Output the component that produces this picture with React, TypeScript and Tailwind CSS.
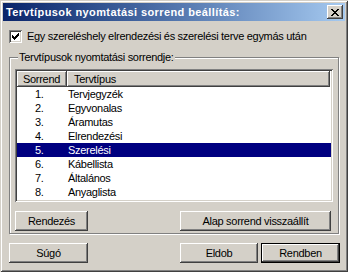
import React from "react";

const raised =
  "shadow-[inset_-1px_-1px_#404040,inset_1px_1px_#ffffff,inset_-2px_-2px_#808080,inset_2px_2px_#d4d0c8]";
const sunken =
  "shadow-[inset_1px_1px_#808080,inset_-1px_-1px_#ffffff,inset_2px_2px_#404040,inset_-2px_-2px_#d4d0c8]";

const rows = [
  "Tervjegyzék",
  "Egyvonalas",
  "Áramutas",
  "Elrendezési",
  "Szerelési",
  "Kábellista",
  "Általános",
  "Anyaglista",
];

function Btn({ label, w, def }: { label: string; w: string; def?: boolean }) {
  if (def) {
    return (
      <div className={`${w} h-[20px] border border-black flex`}>
        <div className={`flex-1 flex items-center justify-center bg-[#d4d0c8] ${raised}`}>
          {label}
        </div>
      </div>
    );
  }
  return (
    <div className={`${w} h-[20px] flex items-center justify-center bg-[#d4d0c8] ${raised}`}>
      {label}
    </div>
  );
}

export default function App() {
  return (
    <div
      className="w-[348px] h-[272px] bg-[#d4d0c8] p-[3px] flex flex-col text-black text-[11px] leading-[13px] tracking-[-0.3px] font-['Liberation_Sans',Arial,sans-serif] shadow-[inset_1px_1px_#d4d0c8,inset_-1px_-1px_#404040,inset_2px_2px_#ffffff,inset_-2px_-2px_#808080]"
    >
      {/* Title bar */}
      <div className="h-[18px] shrink-0 flex items-center justify-between pl-[3px] pr-[2px] bg-gradient-to-r from-[#0a246a] to-[#a6caf0]">
        <span className="text-white font-bold tracking-[0.4px]">Tervtípusok nyomtatási sorrend beállítás:</span>
        <div className={`w-[16px] h-[14px] bg-[#d4d0c8] flex items-center justify-center ${raised}`}>
          <svg width="8" height="7" viewBox="0 0 8 7" shapeRendering="crispEdges">
            <path
              fill="#000"
              d="M0 0h2v1H0zM6 0h2v1H6zM1 1h2v1H1zM5 1h2v1H5zM2 2h4v1H2zM3 3h2v1H3zM2 4h4v1H2zM1 5h2v1H1zM5 5h2v1H5zM0 6h2v1H0zM6 6h2v1H6z"
            />
          </svg>
        </div>
      </div>

      {/* Content */}
      <div className="flex-1 flex flex-col pl-[6px]">
        {/* Checkbox row */}
        <div className="mt-[9px] h-[13px] flex items-center gap-[5px]">
          <div className={`w-[13px] h-[13px] bg-white flex items-center justify-center ${sunken}`}>
            <svg width="7" height="7" viewBox="0 0 7 7" shapeRendering="crispEdges">
              <path
                fill="#000"
                d="M6 0h1v3H6zM5 1h1v3H5zM4 2h1v3H4zM3 3h1v3H3zM2 4h1v3H2zM1 3h1v3H1zM0 2h1v3H0z"
              />
            </svg>
          </div>
          <span>Egy szereléshely elrendezési és szerelési terve egymás után</span>
        </div>

        {/* Group box */}
        <div className="mt-[14px] w-[330px] h-[177px] border border-[#808080] shadow-[inset_1px_1px_#ffffff,1px_1px_#ffffff] flex flex-col pl-[5px]">
          <div className="-mt-[7px] ml-[3px] px-[1px] w-fit bg-[#d4d0c8] h-[13px]">
            Tervtípusok nyomtatási sorrendje:
          </div>

          {/* List view */}
          <div className={`mt-[5px] w-[318px] h-[133px] bg-white p-[2px] flex flex-col ${sunken}`}>
            <div className="h-[16px] flex shrink-0">
              <div className={`w-[50px] h-full bg-[#d4d0c8] flex items-center pl-[6px] ${raised}`}>
                Sorrend
              </div>
              <div className={`w-[263px] h-full bg-[#d4d0c8] flex items-center pl-[7px] ${raised}`}>
                Tervtípus
              </div>
            </div>
            {rows.map((r, i) => {
              const sel = i === 4;
              return (
                <div
                  key={r}
                  className={`h-[14px] flex items-center ${sel ? "bg-[#000080] text-white" : ""}`}
                >
                  <span className="w-[50px] pl-[18px]">{i + 1}.</span>
                  <span className="pl-[1px]">{r}</span>
                </div>
              );
            })}
          </div>

          {/* Group buttons */}
          <div className="mt-[9px] w-[316px] flex justify-between">
            <Btn label="Rendezés" w="w-[73px]" />
            <Btn label="Alap sorrend visszaállít" w="w-[151px]" />
          </div>
        </div>

        {/* Bottom buttons */}
        <div className="mt-[9px] w-[331px] flex">
          <Btn label="Súgó" w="w-[79px]" />
          <div className="flex-1" />
          <div className="flex gap-[3px]">
            <Btn label="Eldob" w="w-[78px]" />
            <Btn label="Rendben" w="w-[79px]" def />
          </div>
        </div>
      </div>
    </div>
  );
}
